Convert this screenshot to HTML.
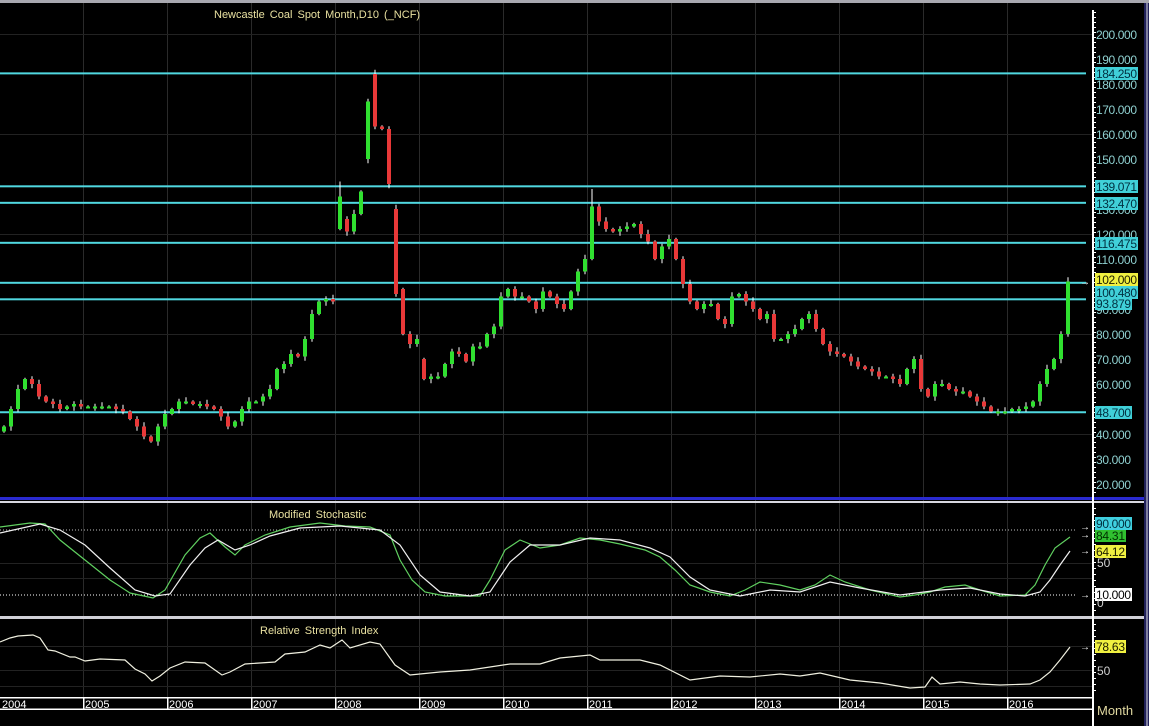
<!DOCTYPE html>
<html><head><meta charset="utf-8"><style>
html,body{margin:0;padding:0;background:#000;}
svg{display:block}
text{font-family:"Liberation Sans",sans-serif;}
</style></head><body>
<svg id="s" width="1149" height="726" viewBox="0 0 1149 726" xmlns="http://www.w3.org/2000/svg">
<rect width="1149" height="726" fill="#000"/>
<rect x="0" y="0" width="1149" height="3" fill="#a8a8b0"/>
<rect x="1144" y="3" width="5" height="723" fill="#20205a"/>
<rect x="1146" y="3" width="2" height="723" fill="#8080a0"/>
<g id="grid"></g>
<g id="hl"></g>
<g id="cd"></g>
<rect x="0" y="497" width="1144" height="3" fill="#2a2ad0"/>
<rect x="0" y="501" width="1144" height="2" fill="#d8d8e0"/>
<rect x="0" y="616" width="1144" height="3" fill="#d0d0d8"/>
<rect x="1092" y="10" width="2" height="716" fill="#fff"/>
<g id="ticks"></g>
<g id="ind"></g>
<rect x="0" y="697" width="1092" height="1.5" fill="#fff"/>
<rect x="0" y="708.5" width="1092" height="1.5" fill="#fff"/>
<g id="dax"></g>
<g font-size="11" fill="#fff">
<text x="2" y="708">2004</text><text x="85" y="708">2005</text><text x="169" y="708">2006</text><text x="253" y="708">2007</text><text x="337" y="708">2008</text><text x="421" y="708">2009</text><text x="505" y="708">2010</text><text x="589" y="708">2011</text><text x="673" y="708">2012</text><text x="757" y="708">2013</text><text x="841" y="708">2014</text><text x="925" y="708">2015</text><text x="1009" y="708">2016</text>
</g>
<text x="1097" y="715" font-size="13" fill="#e0d8a0">Month</text>
<text x="214" y="18" font-size="11" fill="#e8e0a0" word-spacing="2">Newcastle Coal Spot Month,D10 (_NCF)</text>
<text x="269" y="518" font-size="11" fill="#e8e0a0" word-spacing="2">Modified Stochastic</text>
<text x="260" y="634" font-size="11" fill="#e8e0a0" word-spacing="2">Relative Strength Index</text>
<g font-size="12" fill="#8fd0d0">
<text x="1096" y="39" textLength="41">200.000</text><text x="1096" y="64" textLength="41">190.000</text><text x="1096" y="89" textLength="41">180.000</text><text x="1096" y="114" textLength="41">170.000</text><text x="1096" y="139" textLength="41">160.000</text><text x="1096" y="164" textLength="41">150.000</text><text x="1096" y="214" textLength="41">130.000</text><text x="1096" y="239" textLength="41">120.000</text><text x="1096" y="264" textLength="41">110.000</text><text x="1096" y="314" textLength="35">90.000</text><text x="1096" y="339" textLength="35">80.000</text><text x="1096" y="364" textLength="35">70.000</text><text x="1096" y="389" textLength="35">60.000</text><text x="1096" y="439" textLength="35">40.000</text><text x="1096" y="464" textLength="35">30.000</text><text x="1096" y="489" textLength="35">20.000</text>
</g>
<g font-size="12">
<rect x="1095" y="67" width="43" height="13" fill="#40d0d8"/><text x="1096" y="78" fill="#003040" textLength="41">184.250</text>
<rect x="1095" y="180" width="43" height="13" fill="#40d0d8"/><text x="1096" y="191" fill="#003040" textLength="41">139.071</text>
<rect x="1095" y="197" width="43" height="13" fill="#40d0d8"/><text x="1096" y="208" fill="#003040" textLength="41">132.470</text>
<rect x="1095" y="237" width="43" height="13" fill="#40d0d8"/><text x="1096" y="248" fill="#003040" textLength="41">116.475</text>
<rect x="1095" y="273" width="43" height="13" fill="#f0f040"/><text x="1096" y="284" fill="#202000" textLength="41">102.000</text>
<rect x="1095" y="286" width="43" height="13" fill="#40d0d8"/><text x="1096" y="297" fill="#003040" textLength="41">100.480</text>
<rect x="1095" y="298" width="37" height="12" fill="#40d0d8"/><text x="1096" y="308" fill="#003040" textLength="35">93.879</text>
<rect x="1095" y="406" width="37" height="13" fill="#40d0d8"/><text x="1096" y="417" fill="#003040" textLength="35">48.700</text>
<rect x="1095" y="517" width="37" height="13" fill="#40d0e0"/><text x="1096" y="528" fill="#003040" textLength="35">90.000</text>
<rect x="1095" y="530" width="31" height="12" fill="#30c030"/><text x="1096" y="540" fill="#003000" textLength="29">84.31</text>
<rect x="1095" y="545" width="31" height="13" fill="#f0f040"/><text x="1096" y="556" fill="#202000" textLength="29">64.12</text>
<text x="1097" y="567" fill="#d0d0d0">50</text>
<rect x="1095" y="588" width="37" height="13" fill="#fff"/><text x="1096" y="599" fill="#000" textLength="35">10.000</text>
<text x="1097" y="607" fill="#d0d0d0">0</text>
<rect x="1095" y="640" width="31" height="13" fill="#f0f040"/><text x="1096" y="651" fill="#202000" textLength="29">78.63</text>
<text x="1097" y="675" fill="#d0d0d0">50</text>
</g>
<g font-size="10" fill="#fff"><text x="1080" y="285">→</text><text x="1080" y="530">→</text><text x="1080" y="538">→</text><text x="1080" y="554">→</text><text x="1080" y="598">→</text><text x="1080" y="650">→</text></g>
</svg>
<script>
var NS="http://www.w3.org/2000/svg";
function el(p,t,a){var e=document.createElementNS(NS,t);for(var k in a)e.setAttribute(k,a[k]);document.getElementById(p).appendChild(e);return e;}
function Y(p){return 34+(200-p)*2.5;}
var yrs=[83,167,251,335,419,503,587,671,755,839,923,1007];
yrs.forEach(function(x){
 el("grid","rect",{x:x,y:3,width:1,height:694,fill:"#2a2a2a"});
 el("dax","rect",{x:x,y:697,width:1.5,height:12,fill:"#fff"});
});
[40,80,120,160,200].forEach(function(p){el("grid","rect",{x:0,y:Y(p),width:1092,height:1,fill:"#222"});});
[563,578].forEach(function(y){el("grid","rect",{x:0,y:y,width:1092,height:1,fill:"#222"});});
[646,670,686].forEach(function(y){el("grid","rect",{x:0,y:y,width:1092,height:1,fill:"#222"});});
[184.25,139.071,132.47,116.475,100.48,93.879,48.7].forEach(function(p){
 el("hl","rect",{x:0,y:Y(p)-1,width:1086,height:2,fill:"#50d8e0"});});
el("hl","line",{x1:0,y1:530,x2:1075,y2:530,stroke:"#c0c0c0","stroke-dasharray":"1 2"});
el("hl","line",{x1:0,y1:595,x2:1075,y2:595,stroke:"#fff","stroke-dasharray":"1 2"});
for(var y=12;y<497;y+=5)el("ticks","rect",{x:1093,y:y,width:(y%25==9?5:3),height:1,fill:"#fff"});
for(var y=508;y<614;y+=6)el("ticks","rect",{x:1093,y:y,width:3,height:1,fill:"#fff"});
for(var y=624;y<696;y+=6)el("ticks","rect",{x:1093,y:y,width:3,height:1,fill:"#fff"});
var C=[43,50,58,62,60,55,53,52,50,51,52,51,
51,51,51,51,50,49,46,43,39,37,43,48,
50,53,53,52,52,51,50,47,43,45,50,53,
53,55,58,66,68,72,71,78,88,93,94,93,
135,121,128,137,173,163,162,140,96,80,76,78,
62,63,63,68,73,72,69,75,75,80,83,95,
98,95,95,93,90,97,95,92,90,97,105,110,
131,125,122,121,122,123,124,120,117,110,115,118,
110,100,93,90,92,92,86,84,95,96,93,90,
86,88,78,78,80,82,86,88,82,76,73,72,
71,69,67,66,65,63,63,62,60,66,70,58,
55,60,60,58,57,57,55,53,51,49,49,49,
50,50,51,53,60,66,70,80,101];
var O={48:122,49:126,52:150,53:184,56:130,57:98,60:70};
for(var i=0;i<C.length;i++){
 var o=(O[i]!==undefined)?O[i]:(i?C[i-1]:41),c=C[i];
 var x=2+7*i, up=c>=o;
 var hi=Math.max(o,c)+0.5+(i*7%3)*0.6, lo=Math.min(o,c)-0.5-(i*5%3)*0.6;
 if(i==48)hi=141; if(i==84)hi=138;
 el("cd","rect",{x:x+1.5,y:Y(hi),width:1,height:Y(lo)-Y(hi),fill:"#fff"});
 var t=Y(Math.max(o,c)),h=Math.max(2,Y(Math.min(o,c))-t);
 el("cd","rect",{x:x,y:t,width:4,height:h,fill:up?"#30e030":"#e83838"});
}
function pl(pts,col){el("ind","polyline",{points:pts,fill:"none",stroke:col,"stroke-width":1.2});}
pl("0,527 30,523 45,524 60,540 85,560 110,580 130,593 153,598 165,590 185,555 200,538 210,533 225,547 235,555 245,545 265,535 290,527 320,523 345,526 370,527 390,535 400,560 412,580 425,592 445,596 480,596 490,580 505,550 520,540 540,548 560,545 580,538 600,540 620,544 645,550 660,557 675,570 690,585 710,592 730,596 745,590 760,582 780,585 800,590 815,585 830,575 845,582 870,590 900,597 915,595 930,592 945,587 965,585 980,590 1000,596 1025,595 1035,585 1045,565 1055,548 1070,537","#60d060");
pl("0,533 40,524 60,530 85,545 110,568 135,590 155,596 170,594 190,565 205,548 218,540 235,550 250,545 270,536 300,528 340,526 380,530 400,545 420,575 440,592 470,596 490,592 510,562 530,545 560,545 590,538 620,540 650,548 670,557 690,577 710,590 740,596 770,590 800,592 830,582 860,588 900,595 940,590 970,588 1000,594 1025,596 1040,592 1050,580 1060,565 1070,551","#f0f0f0");
pl("0,642 10,638 18,636 33,635 40,638 48,650 55,651 70,657 75,657 85,661 100,659 125,660 135,669 145,674 152,681 160,676 170,668 185,662 205,663 222,675 230,672 245,664 275,662 285,654 305,652 320,645 330,648 342,640 350,648 370,642 380,644 395,665 410,675 440,672 470,670 510,664 540,664 560,658 590,655 600,660 640,660 660,665 690,680 720,676 750,677 780,674 800,676 820,673 850,680 880,683 910,688 925,687 932,677 940,684 960,682 980,684 1000,685 1030,684 1040,680 1050,672 1060,660 1070,647","#f0f0e0");
</script>
</body></html>
